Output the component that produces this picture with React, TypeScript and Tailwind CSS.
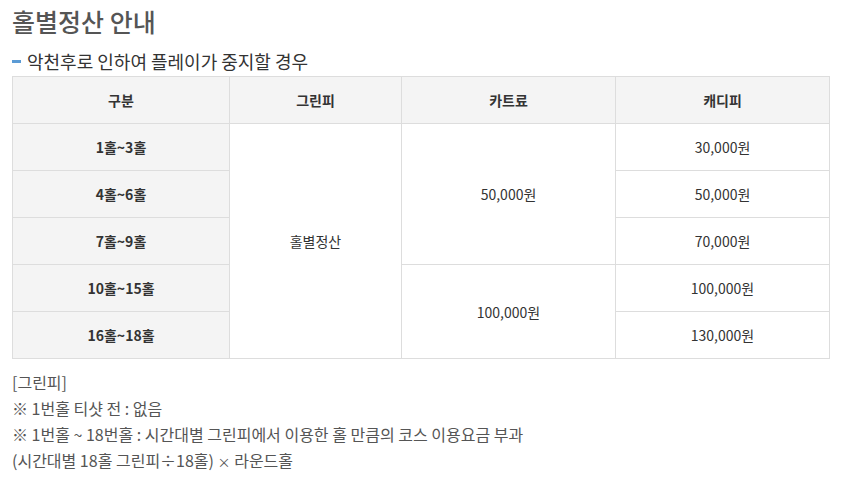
import React from 'react';

const rows = [
  { label: '1홀~3홀', caddie: '30,000원' },
  { label: '4홀~6홀', caddie: '50,000원' },
  { label: '7홀~9홀', caddie: '70,000원' },
  { label: '10홀~15홀', caddie: '100,000원' },
  { label: '16홀~18홀', caddie: '130,000원' },
];

const App = () => {
  const cell = 'border border-[#dddddd] h-[47px] text-center align-middle';

  return (
    <div className="bg-white px-3 pt-[4px] text-[#333] font-['Noto_Sans_CJK_KR','Noto_Sans',sans-serif]">
      <h1 className="text-[25px] leading-[34px] font-medium text-[#555]">홀별정산 안내</h1>

      <h2 className="mt-[10px] flex items-center text-[18px] leading-[26px] text-[#333]">
        <span className="mr-[6px] inline-block h-[3px] w-[9px] bg-[#5b9bd5]" />
        악천후로 인하여 플레이가 중지할 경우
      </h2>

      <table className="mt-[2px] w-[818px] border-collapse text-[14px] leading-[20px]">
        <thead>
          <tr className="bg-[#f4f4f4] font-bold">
            <th className={`${cell} w-[217px]`}>구분</th>
            <th className={`${cell} w-[172px]`}>그린피</th>
            <th className={`${cell} w-[214px]`}>카트료</th>
            <th className={cell}>캐디피</th>
          </tr>
        </thead>
        <tbody>
          {rows.map((row, i) => (
            <tr key={row.label}>
              <td className={`${cell} bg-[#f4f4f4] font-bold`}>{row.label}</td>
              {i === 0 && (
                <td rowSpan={5} className={cell}>
                  홀별정산
                </td>
              )}
              {i === 0 && (
                <td rowSpan={3} className={cell}>
                  50,000원
                </td>
              )}
              {i === 3 && (
                <td rowSpan={2} className={cell}>
                  100,000원
                </td>
              )}
              <td className={cell}>{row.caddie}</td>
            </tr>
          ))}
        </tbody>
      </table>

      <div className="mt-[10px] text-[16px] leading-[26px] text-[#555]">
        <p>[그린피]</p>
        <p>※ 1번홀 티샷 전 : 없음</p>
        <p>※ 1번홀 ~ 18번홀 : 시간대별 그린피에서 이용한 홀 만큼의 코스 이용요금 부과</p>
        <p>
          (시간대별 18홀 그린피÷18홀) <span className="text-[13px]">×</span> 라운드홀
        </p>
      </div>
    </div>
  );
};

export default App;
